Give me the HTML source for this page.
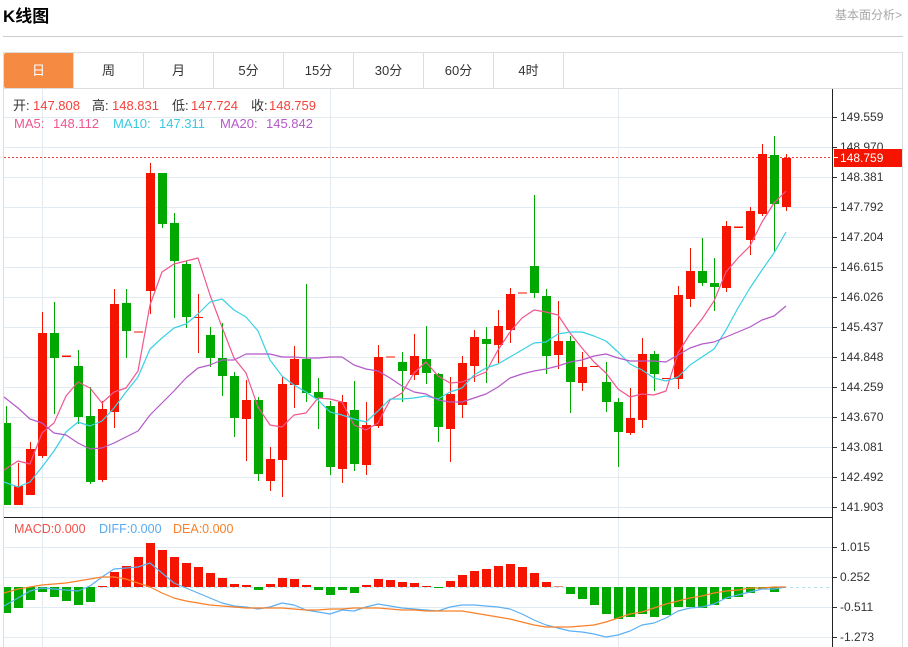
<!DOCTYPE html>
<html lang="zh">
<head>
<meta charset="utf-8">
<title>K线图</title>
<style>
html,body{margin:0;padding:0;background:#fff;}
body{position:relative;width:908px;height:647px;overflow:hidden;font-family:"Liberation Sans","Noto Sans CJK SC",sans-serif;color:#333;}
.a{position:absolute;white-space:nowrap;}
.tab{position:absolute;top:53px;height:35px;width:69px;line-height:36px;text-align:center;font-size:13px;color:#333;border-right:1px solid #ddd;}
.on{background:#f58b42;color:#fff;border-radius:2px 0 0 2px;border-right:1px solid #ddd;}
.ax{position:absolute;left:840px;font-size:12px;line-height:14px;color:#333;}
.t{position:absolute;white-space:nowrap;font-size:13px;line-height:16px;}
.r{color:#f4423a;}
svg{position:absolute;left:0;top:0;}
</style>
</head>
<body>
<div class="a" style="left:3px;top:6px;font-size:17px;line-height:22px;font-weight:bold;color:#000;">K线图</div>
<div class="a" style="left:835px;top:7px;font-size:12px;line-height:16px;color:#a8a8a8;">基本面分析&gt;</div>

<svg width="908" height="647" viewBox="0 0 908 647">
<path d="M3 36.5H903" stroke="#ccc" stroke-width="1" fill="none"/>
<path d="M3.5 52V647M902.5 52V647M3 52.5H903M3 88.5H903" stroke="#ddd" stroke-width="1" fill="none"/>
<path d="M4 117.5H832M4 147.5H832M4 177.5H832M4 207.5H832M4 237.5H832M4 267.5H832M4 297.5H832M4 327.5H832M4 357.5H832M4 387.5H832M4 417.5H832M4 447.5H832M4 477.5H832M4 507.5H832M4 547.5H832M4 577.5H832M4 607.5H832M4 637.5H832M42.5 89V647M330.5 89V647M618.5 89V647" stroke="#e2ebf2" stroke-width="1" fill="none"/>

<!-- dotted last price -->
<path d="M4 157.5H832" stroke="#f5403a" stroke-width="1" stroke-dasharray="2 2" fill="none" shape-rendering="crispEdges"/>
<!-- macd zero -->
<path d="M4 587.5H830" stroke="#b5e3f5" stroke-width="1" stroke-dasharray="3 3" fill="none"/>

<!-- wicks -->
<g shape-rendering="crispEdges" stroke-width="1" fill="none">
<path stroke="#f51400" d="M18.5 463V505M30.5 442V495M42.5 312V458M102.5 401V482M114.5 289V428M150.5 163V314M198.5 294V353M246.5 380V461M270.5 447V491M282.5 377V497M294.5 346V408M342.5 395V483M366.5 402V475M378.5 345V428M414.5 334V380M450.5 377V462M462.5 356V418M474.5 330V382M498.5 310V363M510.5 288V343M558.5 301V369M582.5 352V391M630.5 388V435M642.5 338V428M678.5 286V389M690.5 248V307M726.5 221V292M750.5 207V255M762.5 144V216M786.5 154V211"/>
<path stroke="#00a800" d="M6.5 406V505M54.5 302V414M78.5 350V424M90.5 387V484M126.5 289V358M162.5 173V228M174.5 213V318M186.5 261V328M210.5 327V367M222.5 323V396M234.5 372V437M258.5 397V481M306.5 284V402M318.5 378V429M330.5 401V475M354.5 381V471M402.5 352V402M426.5 326V384M438.5 373V442M486.5 327V383M534.5 195V298M546.5 289V374M570.5 336V413M606.5 362V412M618.5 398V467M654.5 351V391M702.5 238V286M714.5 258V311M774.5 136V252"/>
</g>

<!-- bodies -->
<g shape-rendering="crispEdges">
<path fill="#f51400" d="M14 486h9v19h-9zM26 449h9v46h-9zM38 333h9v123h-9zM98 409h9v71h-9zM110 304h9v108h-9zM146 173h9v118h-9zM242 400h9v19h-9zM266 459h9v22h-9zM278 384h9v76h-9zM290 359h9v26h-9zM338 402h9v67h-9zM362 425h9v40h-9zM374 357h9v69h-9zM410 356h9v19h-9zM446 394h9v35h-9zM458 363h9v42h-9zM470 337h9v29h-9zM494 326h9v19h-9zM506 294h9v36h-9zM554 341h9v14h-9zM578 367h9v16h-9zM626 418h9v15h-9zM638 354h9v66h-9zM674 295h9v84h-9zM686 271h9v28h-9zM722 226h9v62h-9zM746 211h9v29h-9zM758 154h9v60h-9zM782 158h9v49h-9z"/>
<path fill="#f68a80" d="M62 355h9v2h-9zM134 331h9v2h-9zM386 356h9v2h-9zM518 292h9v2h-9zM734 226h9v1h-9z"/>
<path fill="#f51400" d="M194 317h9v1h-9zM590 366h9v1h-9zM662 378h9v1h-9zM734 227h9v1h-9zM62 356h9v1h-9z"/>
<path fill="#00a800" d="M4 423h7v82h-7zM50 333h9v25h-9zM74 366h9v51h-9zM86 416h9v66h-9zM122 303h9v28h-9zM158 173h9v51h-9zM170 223h9v38h-9zM182 264h9v53h-9zM206 335h9v23h-9zM218 358h9v18h-9zM230 376h9v42h-9zM254 400h9v74h-9zM302 359h9v34h-9zM314 392h9v6h-9zM326 406h9v61h-9zM350 410h9v54h-9zM398 362h9v9h-9zM422 359h9v14h-9zM434 374h9v53h-9zM482 339h9v5h-9zM530 266h9v27h-9zM542 296h9v60h-9zM566 341h9v41h-9zM602 382h9v20h-9zM614 402h9v30h-9zM650 354h9v20h-9zM698 271h9v12h-9zM710 283h9v4h-9zM770 155h9v49h-9z"/>

<!-- MACD histogram -->
<path fill="#f51400" d="M98 586h9v1h-9zM110 572h9v15h-9zM122 566h9v21h-9zM134 557h9v30h-9zM146 543h9v44h-9zM158 550h9v37h-9zM170 557h9v30h-9zM182 563h9v24h-9zM194 567h9v20h-9zM206 573h9v14h-9zM218 578h9v9h-9zM230 584h9v3h-9zM242 585h9v2h-9zM266 584h9v3h-9zM278 578h9v9h-9zM290 579h9v8h-9zM302 585h9v2h-9zM362 585h9v2h-9zM374 579h9v8h-9zM386 580h9v7h-9zM398 582h9v5h-9zM410 583h9v4h-9zM422 586h9v1h-9zM446 581h9v6h-9zM458 575h9v12h-9zM470 571h9v16h-9zM482 569h9v18h-9zM494 566h9v21h-9zM506 564h9v23h-9zM518 567h9v20h-9zM530 573h9v14h-9zM542 582h9v5h-9z"/>
<path fill="#f68a80" d="M554 586h9v1h-9z"/>
<path fill="#00a800" d="M4 587h7v26h-7zM14 587h9v21h-9zM26 587h9v13h-9zM38 587h9v5h-9zM50 587h9v10h-9zM62 587h9v14h-9zM74 587h9v18h-9zM86 587h9v15h-9zM254 587h9v3h-9zM314 587h9v3h-9zM326 587h9v8h-9zM338 587h9v3h-9zM350 587h9v6h-9zM434 587h9v1h-9zM566 587h9v7h-9zM578 587h9v12h-9zM590 587h9v18h-9zM602 587h9v27h-9zM614 587h9v32h-9zM626 587h9v30h-9zM638 587h9v27h-9zM650 587h9v30h-9zM662 587h9v28h-9zM674 587h9v20h-9zM686 587h9v20h-9zM698 587h9v21h-9zM710 587h9v18h-9zM722 587h9v12h-9zM734 587h9v10h-9zM746 587h9v6h-9zM758 587h9v2h-9zM770 587h9v5h-9z"/>
</g>

<!-- MA lines -->
<g fill="none" stroke-width="1.2" stroke-linejoin="round">
<path stroke="#f0568f" d="M4 470L18 461L30 464L42 433L54 423L66 396L78 382L90 388L102 403L114 392L126 388L138 371L150 305L162 272L174 264L186 261L198 258L210 295L222 327L234 358L246 373L258 407L270 425L282 427L294 415L306 413L318 398L330 399L342 402L354 425L366 430L378 423L390 400L402 393L414 373L426 362L438 376L450 383L462 382L474 377L486 372L498 350L510 332L522 318L534 310L546 312L558 315L570 333L582 348L594 362L606 373L618 389L630 397L642 394L654 395L666 391L678 353L690 334L702 319L714 301L726 272L738 258L750 246L762 222L774 203L786 191"/>
<path stroke="#3bd0e4" d="M4 482L18 487L30 482L42 467L54 451L66 432L78 422L90 426L102 421L114 408L126 392L138 377L150 349L162 338L174 328L186 324L198 314L210 302L222 299L234 310L246 317L258 331L270 360L282 376L294 385L306 392L318 400L330 412L342 415L354 419L366 422L378 411L390 399L402 399L414 398L426 396L438 399L450 392L462 388L474 375L486 368L498 364L510 357L522 350L534 343L546 342L558 334L570 332L582 332L594 336L606 341L618 352L630 364L642 370L654 378L666 381L678 377L690 365L702 357L714 349L726 330L738 308L750 288L762 270L774 253L786 232"/>
<path stroke="#b45ac8" d="M4 397L18 408L30 419L42 423L54 433L66 435L78 443L90 449L102 448L114 443L126 437L138 431L150 415L162 403L174 391L186 378L198 368L210 365L222 360L234 360L246 354L258 354L270 354L282 357L294 357L306 358L318 358L330 357L342 357L354 365L366 369L378 371L390 378L402 386L414 392L426 394L438 400L450 402L462 402L474 398L486 394L498 387L510 378L522 374L534 371L546 369L558 366L570 362L582 360L594 356L606 354L618 358L630 361L642 361L654 361L666 362L678 355L690 348L702 344L714 342L726 337L738 332L750 327L762 320L774 316L786 306"/>
<path stroke="#5db0f5" d="M4 606L18 598L30 591L42 588L54 589L66 590L78 591L90 586L102 577L114 569L126 568L138 567L150 563L162 573L174 583L186 588L198 593L210 598L222 603L234 606L246 607L258 609L270 607L282 603L294 605L306 610L318 612L330 614L342 610L354 611L366 607L378 604L390 606L402 608L414 609L426 610L438 611L450 607L462 605L474 605L486 606L498 607L510 609L522 614L534 620L546 625L558 628L570 631L582 632L594 634L606 637L618 635L630 631L642 625L654 623L666 618L678 611L690 608L702 607L714 604L726 598L738 595L750 592L762 589L774 589L786 587"/>
<path stroke="#f98028" d="M4 593L18 589L30 587L42 585L54 584L66 583L78 581L90 579L102 577L114 577L126 579L138 583L150 587L162 593L174 598L186 601L198 603L210 605L222 606L234 607L246 608L258 608L270 608L282 608L294 609L306 610L318 610L330 609L342 609L354 608L366 608L378 608L390 609L402 610L414 610L426 611L438 611L450 611L462 611L474 613L486 615L498 617L510 619L522 622L534 625L546 627L558 627L570 627L582 626L594 625L606 622L618 618L630 614L642 612L654 608L666 604L678 601L690 598L702 596L714 593L726 591L738 590L750 588L762 588L774 587L786 587"/>
</g>

<!-- axes -->
<path d="M832.5 89V647M4 517.5H833" stroke="#222" stroke-width="1" fill="none"/>
<path d="M833 117.5h4M833 147.5h4M833 177.5h4M833 207.5h4M833 237.5h4M833 267.5h4M833 297.5h4M833 327.5h4M833 357.5h4M833 387.5h4M833 417.5h4M833 447.5h4M833 477.5h4M833 507.5h4M833 547.5h4M833 577.5h4M833 607.5h4M833 637.5h4" stroke="#333" stroke-width="1" fill="none"/>
</svg>

<div class="tab on" style="left:4px;">日</div>
<div class="tab" style="left:74px;">周</div>
<div class="tab" style="left:144px;">月</div>
<div class="tab" style="left:214px;">5分</div>
<div class="tab" style="left:284px;">15分</div>
<div class="tab" style="left:354px;">30分</div>
<div class="tab" style="left:424px;">60分</div>
<div class="tab" style="left:494px;">4时</div>

<div class="t" style="left:13px;top:98px;color:#333;">开:</div><div class="t r" style="left:33px;top:98px;">147.808</div>
<div class="t" style="left:92px;top:98px;color:#333;">高:</div><div class="t r" style="left:112px;top:98px;">148.831</div>
<div class="t" style="left:172px;top:98px;color:#333;">低:</div><div class="t r" style="left:191px;top:98px;">147.724</div>
<div class="t" style="left:251px;top:98px;color:#333;">收:</div><div class="t r" style="left:269px;top:98px;">148.759</div>
<div class="t" style="left:14px;top:116px;color:#f0568f;">MA5:</div><div class="t" style="left:53px;top:116px;color:#f0568f;">148.112</div>
<div class="t" style="left:113px;top:116px;color:#3bc8e0;">MA10:</div><div class="t" style="left:159px;top:116px;color:#3bc8e0;">147.311</div>
<div class="t" style="left:220px;top:116px;color:#b45ac8;">MA20:</div><div class="t" style="left:266px;top:116px;color:#b45ac8;">145.842</div>

<div class="a" style="left:14px;top:521px;font-size:12.5px;line-height:16px;color:#f4504a;">MACD:0.000</div>
<div class="a" style="left:99px;top:521px;font-size:12.5px;line-height:16px;color:#59aaf0;">DIFF:0.000</div>
<div class="a" style="left:173px;top:521px;font-size:12.5px;line-height:16px;color:#f98028;">DEA:0.000</div>

<div class="ax" style="top:110px;">149.559</div>
<div class="ax" style="top:140px;">148.970</div>
<div class="ax" style="top:170px;">148.381</div>
<div class="ax" style="top:200px;">147.792</div>
<div class="ax" style="top:230px;">147.204</div>
<div class="ax" style="top:260px;">146.615</div>
<div class="ax" style="top:290px;">146.026</div>
<div class="ax" style="top:320px;">145.437</div>
<div class="ax" style="top:350px;">144.848</div>
<div class="ax" style="top:380px;">144.259</div>
<div class="ax" style="top:410px;">143.670</div>
<div class="ax" style="top:440px;">143.081</div>
<div class="ax" style="top:470px;">142.492</div>
<div class="ax" style="top:500px;">141.903</div>
<div class="ax" style="top:540px;">1.015</div>
<div class="ax" style="top:570px;">0.252</div>
<div class="ax" style="top:600px;">-0.511</div>
<div class="ax" style="top:630px;">-1.273</div>

<div class="a" style="left:834px;top:149px;width:68px;height:18px;background:#f51400;"></div>
<div class="a" style="left:834px;top:157px;width:4px;height:1px;background:#fff;"></div>
<div class="a" style="left:840px;top:150px;font-size:12px;line-height:16px;color:#fff;">148.759</div>
</body>
</html>
